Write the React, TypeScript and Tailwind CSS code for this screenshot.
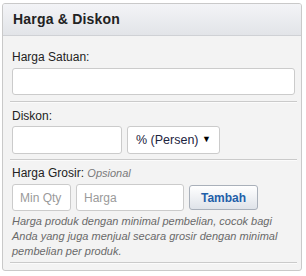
import React from 'react';

const font = { fontFamily: '"Liberation Sans", Arial, sans-serif' };

const Divider = () => <div className="border-t border-t-[#cacaca] border-b border-b-[#fbfbfb]" />;

export default function App() {
  return (
    <div className="w-[306px] h-[276px] bg-white pt-[3px] pl-[2px]" style={font}>
      <div className="w-[300px] h-[268px] border border-[#c9c9c9] rounded-[3px] bg-[#f3f3f3] overflow-hidden">
        <div className="h-[32px] bg-gradient-to-b from-[#f3f4f7] to-[#e2e4e8] border-b border-[#cfd1d5] pl-[10px] flex items-center">
          <h2 className="text-[14px] font-bold text-[#222] tracking-[0.2px]">Harga &amp; Diskon</h2>
        </div>
        <div className="pl-[9px] pr-[6px] pt-[13px]">
          <label className="block text-[12px] leading-[16px] text-[#222] mb-[3px]">Harga Satuan:</label>
          <input className="block w-full h-[27px] bg-white border border-[#cbcbcb] rounded-[3px] px-[6px] text-[12px] outline-none" />
          <div className="mt-[6px] mx-[-2px]"><Divider /></div>
          <label className="block mt-[5px] text-[12px] leading-[16px] text-[#222] mb-[2px]">Diskon:</label>
          <div className="flex gap-[5px]">
            <input className="w-[110px] h-[28px] bg-white border border-[#cbcbcb] rounded-[3px] px-[6px] text-[12px] outline-none" />
            <div className="w-[93px] h-[28px] bg-white border border-[#cbcbcb] rounded-[3px] pl-[8px] pr-[8px] flex items-center justify-between text-[12.5px] text-[#1c2340]">
              <span>% (Persen)</span>
              <span className="text-[9px] text-black">▼</span>
            </div>
          </div>
          <div className="mt-[5px] mx-[-2px]"><Divider /></div>
          <div className="mt-[4px] text-[12px] leading-[16px] text-[#222] mb-[3px]">
            Harga Grosir: <i className="text-[11px] text-[#7a7a7a]">Opsional</i>
          </div>
          <div className="flex items-center gap-[5px]">
            <input placeholder="Min Qty" className="w-[59px] h-[27px] bg-white border border-[#cbcbcb] rounded-[3px] px-[7px] text-[12px] outline-none placeholder:text-[#9a9a9a]" />
            <input placeholder="Harga" className="w-[108px] h-[27px] bg-white border border-[#cbcbcb] rounded-[3px] px-[7px] text-[12px] outline-none placeholder:text-[#9a9a9a]" />
            <button className="w-[69px] h-[25px] rounded-[3px] border border-[#a9b0ba] bg-gradient-to-b from-[#ffffff] to-[#dfe3e9] text-[12px] font-bold text-[#1f5fa9]">Tambah</button>
          </div>
          <p className="mt-[3px] text-[11px] leading-[15px] italic text-[#6a6a6a]">
            Harga produk dengan minimal pembelian, cocok bagi Anda yang juga menjual secara grosir dengan minimal pembelian per produk.
          </p>
          <div className="mt-[3px] mx-[-2px]"><Divider /></div>
        </div>
      </div>
    </div>
  );
}
